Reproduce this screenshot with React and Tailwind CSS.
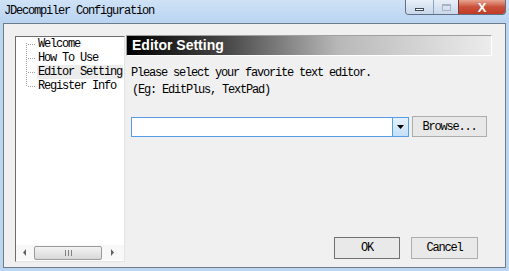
import React from "react";

const mono = { fontFamily: '"Liberation Mono", "DejaVu Sans Mono", monospace' };
const monoText = "text-[12px] tracking-[-1.2px] text-black";

function TreeRow({ label, first, last, selected }) {
  return (
    <div className="flex h-[14px] items-center">
      <div className="w-[10px] shrink-0" />
      <svg width="11" height="14" className="shrink-0">
        {Array.from({ length: 7 }).map((_, i) => {
          const y = i * 2;
          if (first && y < 6) return null;
          if (last && y > 7) return null;
          return <rect key={"v" + i} x="0" y={y} width="1" height="1" fill="#a0a0a0" />;
        })}
        {[2, 4, 6, 8].map((x) => (
          <rect key={"h" + x} x={x} y="7" width="1" height="1" fill="#a0a0a0" />
        ))}
      </svg>
      <span
        className={`h-[14px] pl-[1px] pr-[1px] leading-[14px] whitespace-nowrap ${monoText} ${selected ? "bg-[#ececec]" : ""}`}
        style={mono}
      >
        {label}
      </span>
    </div>
  );
}

export default function App() {
  return (
    <div className="relative h-[271px] w-[509px] overflow-hidden bg-[#bcd6f1]">
      {/* Title bar */}
      <div className="relative flex h-[23px] items-start bg-gradient-to-b from-[#cfe2f6] to-[#b9d4f1]">
        <span className={`ml-[4px] mt-[4px] leading-[14px] ${monoText}`} style={mono}>
          JDecompiler Configuration
        </span>
        <div className="ml-auto mr-[3px] flex h-[15px] overflow-hidden rounded-b-[4px] border border-t-0 border-[#5f6f86]">
          <div className="flex w-[27px] items-end justify-center bg-gradient-to-b from-[#e8eff8] to-[#c8d7ea] pb-[3px]">
            <div className="h-[3px] w-[9px] border border-[#3c4a5c] bg-white" />
          </div>
          <div className="flex w-[25px] items-center justify-center border-l border-[#8ea3bf] bg-gradient-to-b from-[#e8eff8] to-[#c8d7ea]">
            <div className="h-[7px] w-[9px] border border-[#a6b4c6] border-t-2" />
          </div>
          <div className="flex w-[47px] items-center justify-center border-l border-[#7a3a33] bg-gradient-to-b from-[#e8a493] via-[#c9503a] to-[#c13a26]">
            <span className="text-[13px] font-bold leading-[13px] text-white" style={{ fontFamily: '"Liberation Sans", sans-serif' }}>
              X
            </span>
          </div>
        </div>
      </div>

      {/* Client area */}
      <div className="ml-[3px] h-[245px] w-[503px] border border-[#6e7b8a] bg-[#f0f0f0]">
        <div className="flex items-start pl-[11px] pt-[11px]">
          {/* Tree */}
          <div className="mt-[1px] flex h-[226px] w-[110px] flex-col border-l border-t border-[#6d6d6d] border-r border-r-[#e3e3e3] border-b border-b-[#e3e3e3] bg-white">
            <div className="flex-1">
              <TreeRow label="Welcome" first />
              <TreeRow label="How To Use" />
              <TreeRow label="Editor Setting" selected />
              <TreeRow label="Register Info" last />
            </div>
            <div className="mb-[1px] flex h-[15px] items-center bg-[#f8f8f8]">
              <div className="flex w-[18px] items-center justify-center">
                <svg width="4" height="7"><path d="M3 0 L0 3.5 L3 7 Z" fill="#606060" /></svg>
              </div>
              <div className="flex h-[14px] w-[68px] items-center justify-center rounded-[2px] border border-[#9a9a9a] bg-gradient-to-b from-[#f3f3f3] to-[#d8d8d8]">
                <svg width="7" height="6">
                  <rect x="0" y="0" width="1" height="6" fill="#808080" />
                  <rect x="3" y="0" width="1" height="6" fill="#808080" />
                  <rect x="6" y="0" width="1" height="6" fill="#808080" />
                </svg>
              </div>
              <div className="flex w-[21px] items-center justify-center">
                <svg width="4" height="7"><path d="M0 0 L3 3.5 L0 7 Z" fill="#606060" /></svg>
              </div>
            </div>
          </div>

          {/* Right panel */}
          <div className="ml-[1px] flex w-[366px] flex-col">
            <div className="h-[21px] border-l border-t border-[#a0a0a0] border-r border-r-white border-b border-b-white">
              <div className="flex h-[19px] items-center bg-[linear-gradient(to_right,#000000_0%,#4a4a4a_28%,#b8b8b8_58%,#ececec_100%)] pl-[5px]">
                <span className="text-[14px] font-bold leading-[19px] text-white" style={{ fontFamily: '"Liberation Sans", Arial, sans-serif' }}>
                  Editor Setting
                </span>
              </div>
            </div>
            <div className={`mt-[10px] pl-[5px] leading-[14px] ${monoText}`} style={mono}>
              Please select your favorite text editor.
            </div>
            <div className={`mt-[3px] pl-[6px] leading-[14px] ${monoText}`} style={mono}>
              (Eg: EditPlus, TextPad)
            </div>
            <div className="mt-[19px] flex items-start pl-[5px]">
              <div className="mt-[1px] flex h-[20px] w-[278px] border border-[#569de5] bg-white">
                <div className="flex-1" />
                <div className="flex w-[16px] items-center justify-center border-l border-[#569de5] bg-gradient-to-b from-[#e5f1fb] to-[#c4e0fa]">
                  <svg width="7" height="4"><path d="M0 0 L7 0 L3.5 4 Z" fill="#000" /></svg>
                </div>
              </div>
              <div
                className={`ml-[3px] flex h-[21px] w-[75px] items-center justify-center border border-[#adadad] bg-[#e8e8e8] ${monoText}`}
                style={mono}
              >
                Browse...
              </div>
            </div>
            <div className="mt-[100px] flex justify-end pr-[14px]">
              <div
                className={`flex h-[22px] w-[66px] items-center justify-center border border-[#707070] bg-[#e9e9e9] ${monoText}`}
                style={mono}
              >
                OK
              </div>
              <div
                className={`ml-[11px] flex h-[22px] w-[67px] items-center justify-center border border-[#adadad] bg-[#e9e9e9] ${monoText}`}
                style={mono}
              >
                Cancel
              </div>
            </div>
          </div>
        </div>
      </div>
    </div>
  );
}
